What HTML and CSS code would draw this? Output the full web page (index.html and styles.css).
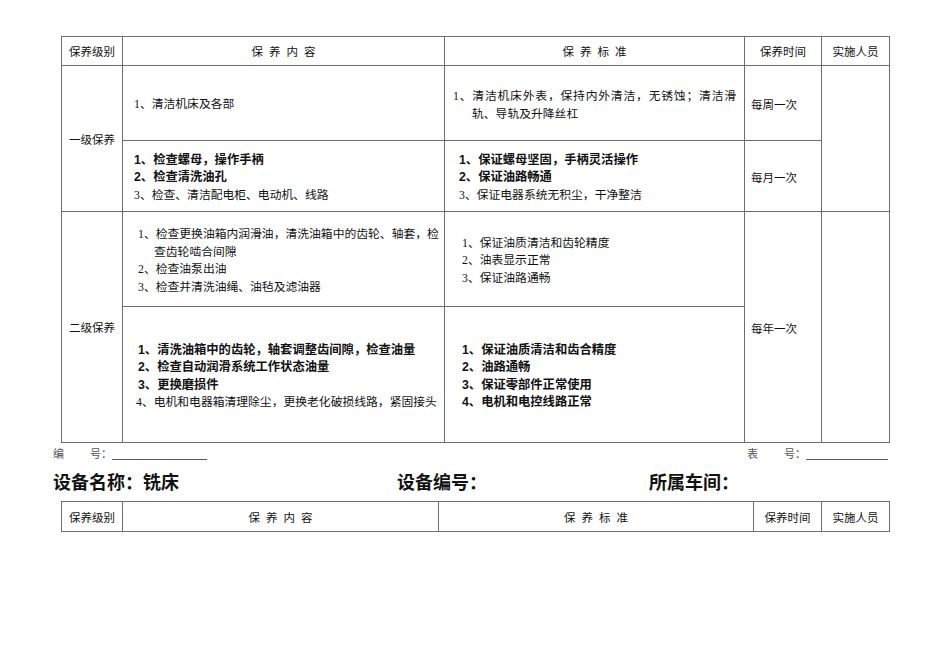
FILE: index.html
```
<!DOCTYPE html>
<html lang="zh-CN">
<head>
<meta charset="utf-8">
<title>铣床保养</title>
<link rel="stylesheet" href="styles.css">
</head>
<body>
<div class="page">
  <table class="grid main">
    <colgroup><col class="m1"><col class="m2"><col class="m3"><col class="m4"><col class="m5"></colgroup>
    <tr class="hd">
      <th>保养级别</th><th class="sp">保养内容</th><th class="sp">保养标准</th><th>保养时间</th><th>实施人员</th>
    </tr>
    <tr class="r1a">
      <td rowspan="2" class="lvl">一级保养</td>
      <td class="txt pa"><div class="ln">1、清洁机床及各部</div></td>
      <td class="txt pc">
        <div class="ln lh18 just">1、清洁机床外表，保持内外清洁，无锈蚀；清洁滑</div>
        <div class="ln lh18 ind">轨、导轨及升降丝杠</div>
      </td>
      <td class="time">每周一次</td>
      <td rowspan="2"></td>
    </tr>
    <tr class="r1b">
      <td class="txt pa">
        <div class="ln b">1、检查螺母，操作手柄</div>
        <div class="ln b">2、检查清洗油孔</div>
        <div class="ln">3、检查、清洁配电柜、电动机、线路</div>
      </td>
      <td class="txt pd">
        <div class="ln b">1、保证螺母坚固，手柄灵活操作</div>
        <div class="ln b">2、保证油路畅通</div>
        <div class="ln">3、保证电器系统无积尘，干净整洁</div>
      </td>
      <td class="time">每月一次</td>
    </tr>
    <tr class="r2a">
      <td rowspan="2" class="lvl">二级保养</td>
      <td class="txt pb">
        <div class="ln">1、检查更换油箱内润滑油，清洗油箱中的齿轮、轴套，检</div>
        <div class="ln ind2">查齿轮啮合间隙</div>
        <div class="ln">2、检查油泵出油</div>
        <div class="ln">3、检查并清洗油绳、油毡及滤油器</div>
      </td>
      <td class="txt pe">
        <div class="ln">1、保证油质清洁和齿轮精度</div>
        <div class="ln">2、油表显示正常</div>
        <div class="ln">3、保证油路通畅</div>
      </td>
      <td rowspan="2" class="time">每年一次</td>
      <td rowspan="2"></td>
    </tr>
    <tr class="r2b">
      <td class="txt pb">
        <div class="ln b">1、清洗油箱中的齿轮，轴套调整齿间隙，检查油量</div>
        <div class="ln b">2、检查自动润滑系统工作状态油量</div>
        <div class="ln b">3、更换磨损件</div>
        <div class="ln out">4、电机和电器箱清理除尘，更换老化破损线路，紧固接头</div>
      </td>
      <td class="txt pe">
        <div class="ln b">1、保证油质清洁和齿合精度</div>
        <div class="ln b">2、油路通畅</div>
        <div class="ln b">3、保证零部件正常使用</div>
        <div class="ln b">4、电机和电控线路正常</div>
      </td>
    </tr>
  </table>

  <div class="meta">
    <div class="field"><span class="k1">编</span><span class="k2">号：</span><span class="blank short"></span></div>
    <div class="field"><span class="k1">表</span><span class="k2">号：</span><span class="blank long"></span></div>
  </div>

  <div class="title">
    <div>设备名称：铣床</div>
    <div>设备编号：</div>
    <div>所属车间：</div>
  </div>

  <table class="grid second">
    <colgroup><col class="s1"><col class="s2"><col class="s3"><col class="s4"><col class="s5"></colgroup>
    <tr class="hd2">
      <th>保养级别</th><th class="sp">保养内容</th><th class="sp">保养标准</th><th>保养时间</th><th>实施人员</th>
    </tr>
  </table>
</div>
</body>
</html>
```

FILE: styles.css
```
html, body {
  margin: 0;
  padding: 0;
  background: #ffffff;
}

body {
  font-family: "Liberation Serif", "Noto Sans CJK SC", serif;
  color: #111111;
  font-size: 11.8px;
}

.page {
  width: 950px;
  padding-top: 36px;
}

.grid {
  border-collapse: collapse;
  table-layout: fixed;
  margin-left: 61px;
}

.grid th,
.grid td {
  border: 1px solid #6e6e6e;
  padding: 0;
  vertical-align: middle;
}

.grid th {
  font-family: "Liberation Sans", "Noto Sans CJK SC", sans-serif;
  font-weight: normal;
  font-size: 11.5px;
  text-align: center;
}

.grid th.sp {
  letter-spacing: 6px;
  padding-left: 6px;
}

.main { width: 828px; }
.m1 { width: 61px; }
.m2 { width: 322px; }
.m3 { width: 300px; }
.m4 { width: 77px; }
.m5 { width: 68px; }

.hd { height: 29px; }
.r1a { height: 75px; }
.r1b { height: 71px; }
.r2a { height: 95px; }
.r2b { height: 136px; }

.lvl {
  font-family: "Liberation Sans", "Noto Sans CJK SC", sans-serif;
  font-size: 11.5px;
  text-align: center;
}

.grid td.time {
  font-family: "Liberation Sans", "Noto Sans CJK SC", sans-serif;
  font-size: 11.5px;
  padding-left: 6px;
  padding-top: 2px;
}

.grid td.txt {
  padding-top: 4px;
}

.txt .ln {
  white-space: nowrap;
  line-height: 17.5px;
}

.ln.lh18 { line-height: 18.3px; }
.ln.just { letter-spacing: 0.8px; }

.ln.b {
  font-family: "Liberation Sans", "Noto Sans CJK SC", sans-serif;
  font-weight: bold;
  font-size: 12.3px;
}

.grid td.pa { padding-left: 11px; }
.grid td.pb { padding-left: 15px; }
.grid td.pc { padding-left: 8px; }
.grid td.pd { padding-left: 14px; }
.grid td.pe { padding-left: 17px; }

.ind { padding-left: 19px; }
.ind2 { padding-left: 16px; }
.out { margin-left: -2px; }

.meta {
  margin-left: 53px;
  width: 835px;
  height: 18px;
  display: flex;
  justify-content: space-between;
  align-items: flex-end;
  font-family: "Liberation Sans", "Noto Sans CJK SC", sans-serif;
  font-size: 11px;
  color: #555;
}

.field {
  display: flex;
  align-items: center;
  height: 16px;
}

.k1 { width: 37px; }
.k2 { width: 22px; }

.blank {
  display: block;
  height: 8px;
  border-bottom: 1px solid #555;
  margin-top: 4px;
}

.blank.short { width: 95px; }
.blank.long { width: 82px; }

.title {
  margin-left: 53px;
  height: 40px;
  display: grid;
  grid-template-columns: 344px 252px auto;
  align-items: center;
  font-family: "Noto Sans CJK SC", sans-serif;
  font-weight: bold;
  font-size: 18px;
  color: #111;
}

.second { width: 828px; }
.s1 { width: 61px; }
.s2 { width: 316px; }
.s3 { width: 315px; }
.s4 { width: 68px; }
.s5 { width: 68px; }

.hd2 { height: 30px; }
```
